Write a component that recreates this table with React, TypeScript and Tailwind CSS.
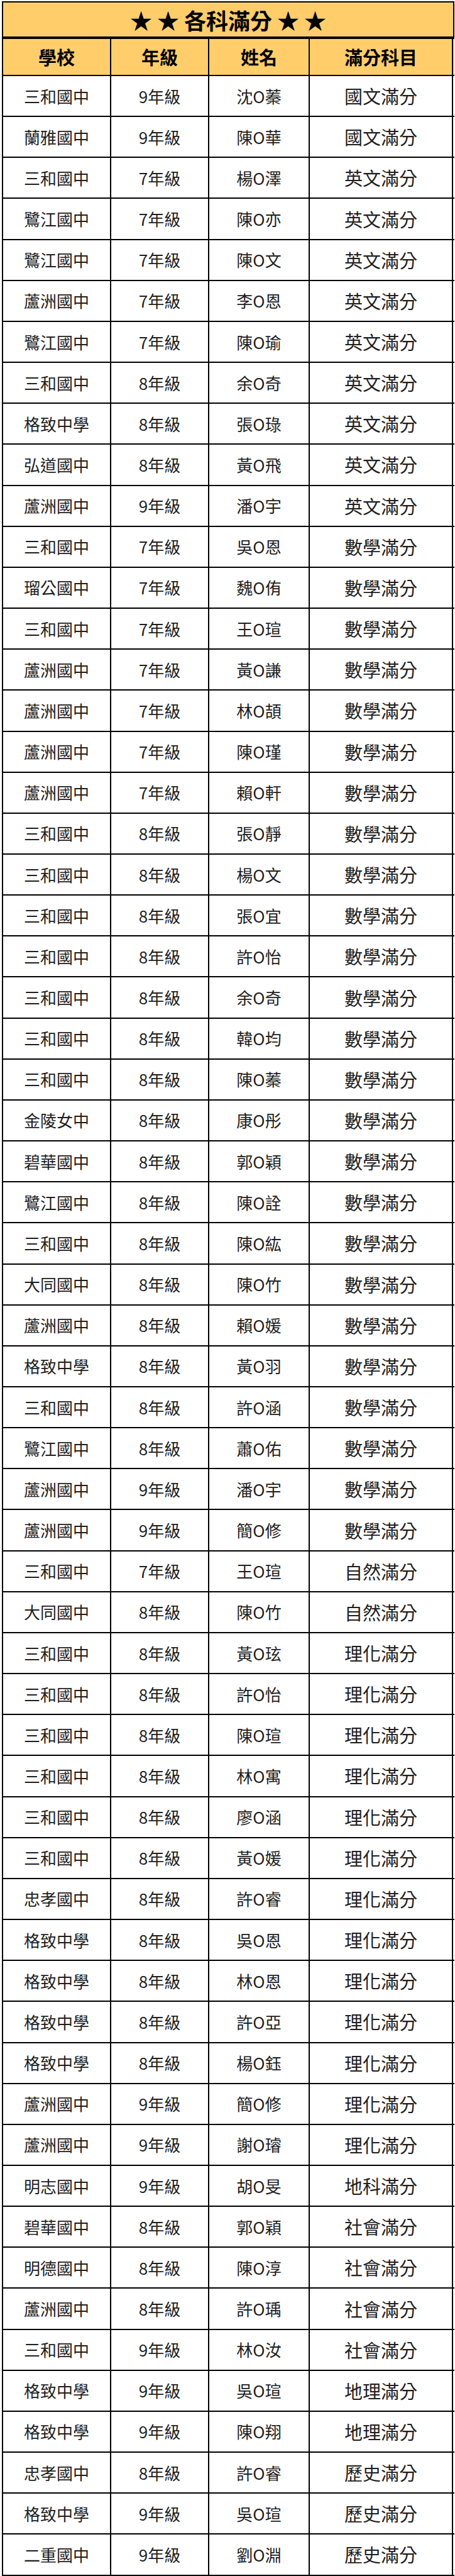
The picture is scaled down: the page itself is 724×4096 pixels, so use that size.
import React from "react";

const rows: [string, string, string, string][] = [
  ["三和國中", "9年級", "沈O蓁", "國文滿分"],
  ["蘭雅國中", "9年級", "陳O華", "國文滿分"],
  ["三和國中", "7年級", "楊O澤", "英文滿分"],
  ["鷺江國中", "7年級", "陳O亦", "英文滿分"],
  ["鷺江國中", "7年級", "陳O文", "英文滿分"],
  ["蘆洲國中", "7年級", "李O恩", "英文滿分"],
  ["鷺江國中", "7年級", "陳O瑜", "英文滿分"],
  ["三和國中", "8年級", "余O奇", "英文滿分"],
  ["格致中學", "8年級", "張O琭", "英文滿分"],
  ["弘道國中", "8年級", "黃O飛", "英文滿分"],
  ["蘆洲國中", "9年級", "潘O宇", "英文滿分"],
  ["三和國中", "7年級", "吳O恩", "數學滿分"],
  ["瑠公國中", "7年級", "魏O侑", "數學滿分"],
  ["三和國中", "7年級", "王O瑄", "數學滿分"],
  ["蘆洲國中", "7年級", "黃O謙", "數學滿分"],
  ["蘆洲國中", "7年級", "林O頡", "數學滿分"],
  ["蘆洲國中", "7年級", "陳O瑾", "數學滿分"],
  ["蘆洲國中", "7年級", "賴O軒", "數學滿分"],
  ["三和國中", "8年級", "張O靜", "數學滿分"],
  ["三和國中", "8年級", "楊O文", "數學滿分"],
  ["三和國中", "8年級", "張O宜", "數學滿分"],
  ["三和國中", "8年級", "許O怡", "數學滿分"],
  ["三和國中", "8年級", "余O奇", "數學滿分"],
  ["三和國中", "8年級", "韓O均", "數學滿分"],
  ["三和國中", "8年級", "陳O蓁", "數學滿分"],
  ["金陵女中", "8年級", "康O彤", "數學滿分"],
  ["碧華國中", "8年級", "郭O穎", "數學滿分"],
  ["鷺江國中", "8年級", "陳O詮", "數學滿分"],
  ["三和國中", "8年級", "陳O紘", "數學滿分"],
  ["大同國中", "8年級", "陳O竹", "數學滿分"],
  ["蘆洲國中", "8年級", "賴O媛", "數學滿分"],
  ["格致中學", "8年級", "黃O羽", "數學滿分"],
  ["三和國中", "8年級", "許O涵", "數學滿分"],
  ["鷺江國中", "8年級", "蕭O佑", "數學滿分"],
  ["蘆洲國中", "9年級", "潘O宇", "數學滿分"],
  ["蘆洲國中", "9年級", "簡O修", "數學滿分"],
  ["三和國中", "7年級", "王O瑄", "自然滿分"],
  ["大同國中", "8年級", "陳O竹", "自然滿分"],
  ["三和國中", "8年級", "黃O玹", "理化滿分"],
  ["三和國中", "8年級", "許O怡", "理化滿分"],
  ["三和國中", "8年級", "陳O瑄", "理化滿分"],
  ["三和國中", "8年級", "林O寓", "理化滿分"],
  ["三和國中", "8年級", "廖O涵", "理化滿分"],
  ["三和國中", "8年級", "黃O媛", "理化滿分"],
  ["忠孝國中", "8年級", "許O睿", "理化滿分"],
  ["格致中學", "8年級", "吳O恩", "理化滿分"],
  ["格致中學", "8年級", "林O恩", "理化滿分"],
  ["格致中學", "8年級", "許O亞", "理化滿分"],
  ["格致中學", "8年級", "楊O鈺", "理化滿分"],
  ["蘆洲國中", "9年級", "簡O修", "理化滿分"],
  ["蘆洲國中", "9年級", "謝O璿", "理化滿分"],
  ["明志國中", "9年級", "胡O旻", "地科滿分"],
  ["碧華國中", "8年級", "郭O穎", "社會滿分"],
  ["明德國中", "8年級", "陳O淳", "社會滿分"],
  ["蘆洲國中", "8年級", "許O瑀", "社會滿分"],
  ["三和國中", "9年級", "林O汝", "社會滿分"],
  ["格致中學", "9年級", "吳O瑄", "地理滿分"],
  ["格致中學", "9年級", "陳O翔", "地理滿分"],
  ["忠孝國中", "8年級", "許O睿", "歷史滿分"],
  ["格致中學", "9年級", "吳O瑄", "歷史滿分"],
  ["二重國中", "9年級", "劉O淵", "歷史滿分"],
];

const font = { fontFamily: "'Noto Sans CJK TC', 'Noto Sans', sans-serif" };

export default function App() {
  return (
    <div className="w-[724px] bg-white pt-[2px] pl-[3px]" style={font}>
      <div className="w-[720px]">
        <div className="box-border h-[58px] border-2 border-black bg-[#FFCE6B] flex items-center justify-center">
          <span className="text-[35px] font-bold leading-none text-black tracking-[0px]">
            ★ ★ 各科滿分 ★ ★
          </span>
        </div>
        <div className="box-border h-[61px] border-l-2 border-t-2 border-b-2 border-black bg-[#FFCE6B] grid grid-cols-[172px_156px_160px_228px]">
          {["學校", "年級", "姓名", "滿分科目"].map((h) => (
            <div
              key={h}
              className="box-border border-r-2 border-black flex items-center justify-center text-[29px] font-bold leading-none text-black"
            >
              {h}
            </div>
          ))}
        </div>
        {rows.map((r, i) => (
          <div
            key={i}
            className="box-border h-[65.16px] border-l-2 border-b-2 border-black bg-white grid grid-cols-[172px_156px_160px_228px] text-[#1e1e1e]"
          >
            <div className="box-border border-r-2 border-black flex items-center justify-center text-[26px] leading-none">
              {r[0]}
            </div>
            <div className="box-border border-r-2 border-black flex items-center justify-center text-[26px] leading-none">
              {r[1]}
            </div>
            <div className="box-border border-r-2 border-black flex items-center justify-center text-[26px] leading-none">
              {r[2]}
            </div>
            <div className="box-border border-r-2 border-black flex items-center justify-center text-[29px] leading-none">
              {r[3]}
            </div>
          </div>
        ))}
      </div>
    </div>
  );
}
